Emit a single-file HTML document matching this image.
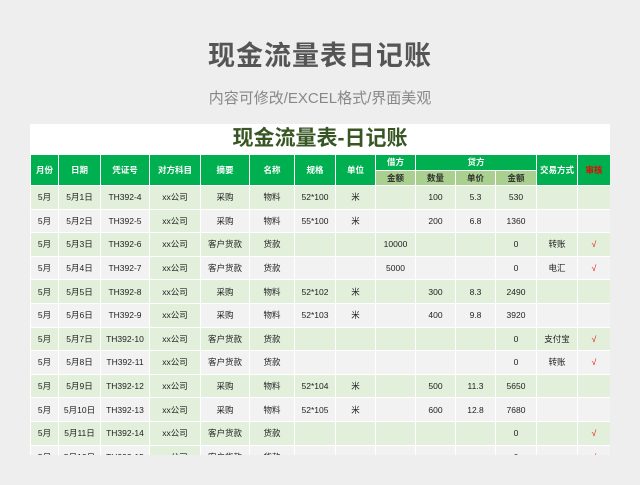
<!DOCTYPE html>
<html><head><meta charset="utf-8"><style>
body{margin:0;width:640px;height:485px;background:#eeeeee;overflow:hidden;font-family:"Liberation Sans","Noto Sans CJK SC",sans-serif;position:relative}
.h1{position:absolute;top:34px;left:0;width:640px;text-align:center;font-size:27px;font-weight:bold;color:#555;letter-spacing:1px}
.h2{position:absolute;top:87px;left:0;width:640px;text-align:center;font-size:15px;color:#888}
.box{position:absolute;left:30px;top:124px;width:580px;height:331px;background:#fff;overflow:hidden}
.t{position:absolute;top:0;left:0;width:580px;text-align:center;font-size:21px;font-weight:bold;color:#375623;line-height:30px}
table{position:absolute;top:30px;left:0;border-collapse:collapse;table-layout:fixed;width:580px}
td{border:1px solid #fff;text-align:center;font-size:8.5px;color:#222;padding:0;height:22.6px;white-space:nowrap;overflow:hidden}
.hd td{background:#00b050;color:#fff;font-weight:bold;height:14.5px}
.hd td.s{background:#a9d08e;color:#333}
tr.g td{background:#e2efda}
tr.w td{background:#f2f2f2}
tr.w td.c{background:#e2efda}
.r{color:#e00}
</style></head><body>
<div class="h1">现金流量表日记账</div>
<div class="h2">内容可修改/EXCEL格式/界面美观</div>
<div class="box">
<div class="t">现金流量表-日记账</div>
<table>
<colgroup><col style="width:28px"><col style="width:42px"><col style="width:49px"><col style="width:51px"><col style="width:49px"><col style="width:45px"><col style="width:41px"><col style="width:40px"><col style="width:40px"><col style="width:40px"><col style="width:40px"><col style="width:41px"><col style="width:41px"><col style="width:33px"></colgroup>
<tr class="hd"><td rowspan="2">月份</td><td rowspan="2">日期</td><td rowspan="2">凭证号</td><td rowspan="2">对方科目</td><td rowspan="2">摘要</td><td rowspan="2">名称</td><td rowspan="2">规格</td><td rowspan="2">单位</td><td>借方</td><td colspan="3">贷方</td><td rowspan="2">交易方式</td><td rowspan="2" class="r" style="color:#e00">审核</td></tr>
<tr class="hd"><td class="s">金额</td><td class="s">数量</td><td class="s">单价</td><td class="s">金额</td></tr>
<tr class="g"><td>5月</td><td>5月1日</td><td>TH392-4</td><td class="c">xx公司</td><td>采购</td><td>物料</td><td>52*100</td><td>米</td><td></td><td>100</td><td>5.3</td><td>530</td><td></td><td></td></tr>
<tr class="w"><td>5月</td><td>5月2日</td><td>TH392-5</td><td class="c">xx公司</td><td>采购</td><td>物料</td><td>55*100</td><td>米</td><td></td><td>200</td><td>6.8</td><td>1360</td><td></td><td></td></tr>
<tr class="g"><td>5月</td><td>5月3日</td><td>TH392-6</td><td class="c">xx公司</td><td>客户货款</td><td>货款</td><td></td><td></td><td>10000</td><td></td><td></td><td>0</td><td>转账</td><td class="r">√</td></tr>
<tr class="w"><td>5月</td><td>5月4日</td><td>TH392-7</td><td class="c">xx公司</td><td>客户货款</td><td>货款</td><td></td><td></td><td>5000</td><td></td><td></td><td>0</td><td>电汇</td><td class="r">√</td></tr>
<tr class="g"><td>5月</td><td>5月5日</td><td>TH392-8</td><td class="c">xx公司</td><td>采购</td><td>物料</td><td>52*102</td><td>米</td><td></td><td>300</td><td>8.3</td><td>2490</td><td></td><td></td></tr>
<tr class="w"><td>5月</td><td>5月6日</td><td>TH392-9</td><td class="c">xx公司</td><td>采购</td><td>物料</td><td>52*103</td><td>米</td><td></td><td>400</td><td>9.8</td><td>3920</td><td></td><td></td></tr>
<tr class="g"><td>5月</td><td>5月7日</td><td>TH392-10</td><td class="c">xx公司</td><td>客户货款</td><td>货款</td><td></td><td></td><td></td><td></td><td></td><td>0</td><td>支付宝</td><td class="r">√</td></tr>
<tr class="w"><td>5月</td><td>5月8日</td><td>TH392-11</td><td class="c">xx公司</td><td>客户货款</td><td>货款</td><td></td><td></td><td></td><td></td><td></td><td>0</td><td>转账</td><td class="r">√</td></tr>
<tr class="g"><td>5月</td><td>5月9日</td><td>TH392-12</td><td class="c">xx公司</td><td>采购</td><td>物料</td><td>52*104</td><td>米</td><td></td><td>500</td><td>11.3</td><td>5650</td><td></td><td></td></tr>
<tr class="w"><td>5月</td><td>5月10日</td><td>TH392-13</td><td class="c">xx公司</td><td>采购</td><td>物料</td><td>52*105</td><td>米</td><td></td><td>600</td><td>12.8</td><td>7680</td><td></td><td></td></tr>
<tr class="g"><td>5月</td><td>5月11日</td><td>TH392-14</td><td class="c">xx公司</td><td>客户货款</td><td>货款</td><td></td><td></td><td></td><td></td><td></td><td>0</td><td></td><td class="r">√</td></tr>
<tr class="w"><td>5月</td><td>5月12日</td><td>TH392-15</td><td class="c">xx公司</td><td>客户货款</td><td>货款</td><td></td><td></td><td></td><td></td><td></td><td>0</td><td></td><td class="r">√</td></tr>
</table>
</div>
</body></html>
